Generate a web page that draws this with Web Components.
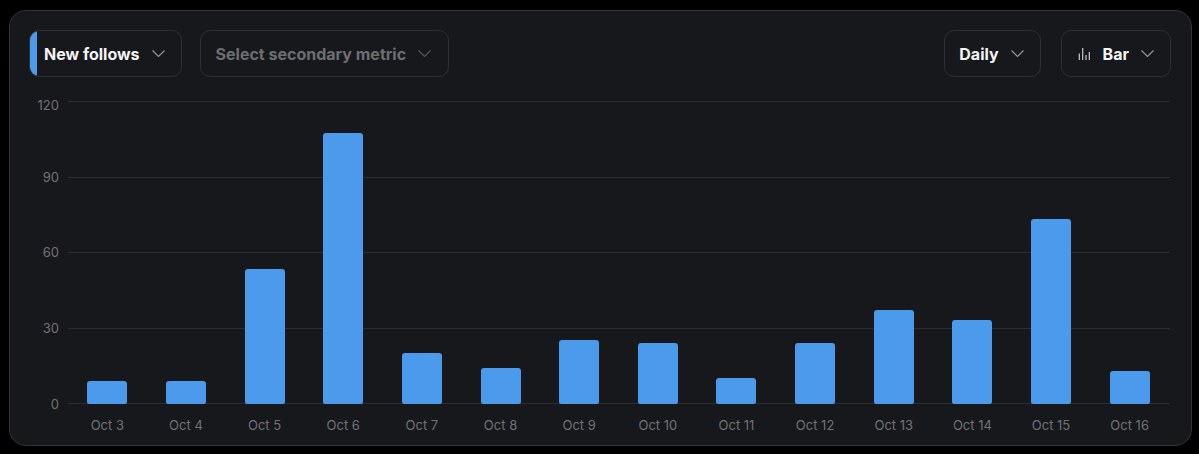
<!DOCTYPE html>
<html>
<head>
<meta charset="utf-8">
<style>
  html, body { margin: 0; height: 100%; background: #000; }
  body { font-family: Inter, "Liberation Sans", sans-serif; overflow: hidden; }
</style>
</head>
<body>
<analytics-card>
  <metric-select slot="left" accent>New follows</metric-select>
  <metric-select slot="left" muted>Select secondary metric</metric-select>
  <metric-select slot="right">Daily</metric-select>
  <metric-select slot="right"><svg slot="icon" width="14" height="14" viewBox="0 0 14 14" fill="none" stroke="#c9cacc" stroke-width="1.200"><path d="M1.300 6.500V13M4.700 1V13M8 8V13M11.300 5V13"/></svg>Bar</metric-select>
  <bar-chart></bar-chart>
</analytics-card>

<script>
const cardTemplate = document.createElement('template')
cardTemplate.innerHTML = `
  <style>
    :host {
      display: block;
      box-sizing: border-box;
      width: 1183px;
      height: 436px;
      margin: 10px 0 0 9px;
      padding: 19px 20px 0 20px;
      background: #17181c;
      border: 1px solid #333438;
      border-radius: 17px;
    }
    .toolbar {
      display: flex;
      justify-content: space-between;
      margin-bottom: 24px;
    }
    .group {
      display: flex;
      gap: 20px;
    }
    .group.start {
      gap: 18px;
      margin-left: -1px;
    }
  </style>
  <div class="toolbar">
    <div class="group start"><slot name="left"></slot></div>
    <div class="group"><slot name="right"></slot></div>
  </div>
  <slot></slot>
`

customElements.define('analytics-card',
  class extends HTMLElement {
    constructor() {
      super()
      this.attachShadow({ mode: 'open' })
      this.shadowRoot.appendChild(cardTemplate.content.cloneNode(true))
    }
  }
)

const selectTemplate = document.createElement('template')
selectTemplate.innerHTML = `
  <style>
    :host {
      display: flex;
      align-items: center;
      box-sizing: border-box;
      position: relative;
      height: 47px;
      padding: 0 16px 0 14px;
      border: 1px solid #2e2f33;
      border-radius: 10px;
      color: #f4f4f5;
      font-size: 16px;
      font-weight: 700;
      overflow: hidden;
    }
    :host([muted]) {
      color: #6d6e72;
      padding: 0 17px 0 15px;
    }
    :host([accent])::before {
      content: '';
      position: absolute;
      left: -1px;
      top: -1px;
      bottom: -1px;
      width: 8px;
      background: #4c9aec;
    }
    ::slotted(svg) {
      margin-right: 11px;
      margin-left: 2px;
    }
    svg.chevron {
      margin-left: 12px;
      flex: none;
    }
    :host([muted]) svg.chevron {
      stroke: #55565a;
    }
  </style>
  <slot name="icon"></slot>
  <slot></slot>
  <svg class="chevron" width="13" height="7" viewBox="0 0 13 7" fill="none" stroke="#96979a" stroke-width="1.100"><path d="M.5.500 6.500 6.500 12.500.500"/></svg>
`

customElements.define('metric-select',
  class extends HTMLElement {
    constructor() {
      super()
      this.attachShadow({ mode: 'open' })
      this.shadowRoot.appendChild(selectTemplate.content.cloneNode(true))
    }
  }
)

const chartTemplate = document.createElement('template')
chartTemplate.innerHTML = `
  <style>
    :host {
      display: grid;
      grid-template-columns: 30px 1102px;
      grid-template-rows: 303px auto;
      column-gap: 8px;
      color: #717276;
      font-size: 13px;
    }
    .ticks {
      display: flex;
      flex-direction: column;
      justify-content: space-between;
      align-items: flex-end;
    }
    .ticks span {
      height: 1px;
      line-height: 1px;
      transform: translateX(-1px);
    }
    .ticks span:first-child {
      transform: translate(-1px, 4px);
    }
    .ticks span:last-child {
      transform: translate(-1px, 1px);
    }
    .plot {
      display: grid;
    }
    .lines, .bars {
      grid-area: 1 / 1;
    }
    .lines {
      display: flex;
      flex-direction: column;
      justify-content: space-between;
    }
    .lines i {
      display: block;
      height: 1px;
      background: #2d2e32;
    }
    .bars, .dates {
      display: grid;
      grid-template-columns: repeat(14, 1fr);
      margin-right: 1px;
    }
    .bars {
      align-items: end;
      justify-items: center;
    }
    .bars i {
      display: block;
      width: 40px;
      background: #4c9aec;
      border-radius: 3px 3px 2px 2px;
    }
    .dates {
      grid-column: 2;
      padding-top: 13px;
      text-align: center;
      line-height: 16px;
    }
  </style>
  <div class="ticks"></div>
  <div class="plot">
    <div class="lines"></div>
    <div class="bars"></div>
  </div>
  <div class="dates"></div>
`

customElements.define('bar-chart',
  class extends HTMLElement {
    constructor() {
      super()
      this.attachShadow({ mode: 'open' })
      this.shadowRoot.appendChild(chartTemplate.content.cloneNode(true))
      this.#render()
    }

    #render() {
      const values = [9.200, 9.200, 53.300, 107.500, 20.400, 14.400, 25.200, 24.200, 10.400, 24.200, 37.400, 33.400, 73.400, 13.200]
      const ticks = this.shadowRoot.querySelector('.ticks')
      const lines = this.shadowRoot.querySelector('.lines')
      const bars = this.shadowRoot.querySelector('.bars')
      const dates = this.shadowRoot.querySelector('.dates')

      for (const tick of [120, 90, 60, 30, 0]) {
        const label = document.createElement('span')
        label.textContent = tick
        ticks.appendChild(label)
        lines.appendChild(document.createElement('i'))
      }

      values.forEach((value, index) => {
        const bar = document.createElement('i')
        bar.style.height = `${value / 120 * 100}%`
        bars.appendChild(bar)

        const date = document.createElement('span')
        date.textContent = `Oct ${index + 3}`
        dates.appendChild(date)
      })
    }
  }
)
</script>
</body>
</html>
